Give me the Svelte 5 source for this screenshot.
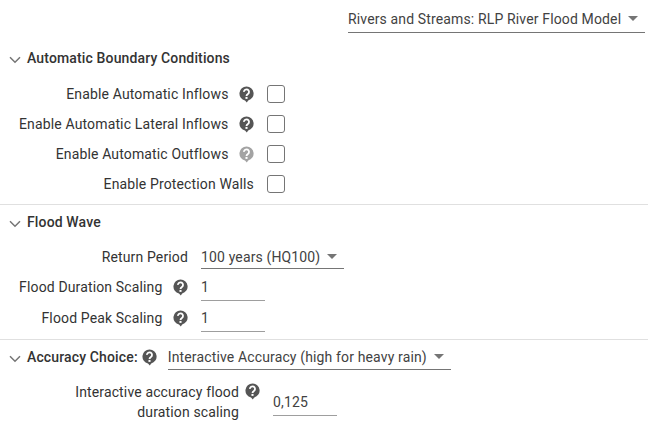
<script>
  const boundaryRows = [
    { label: "Enable Automatic Inflows", help: "on" },
    { label: "Enable Automatic Lateral Inflows", help: "on" },
    { label: "Enable Automatic Outflows", help: "off" },
    { label: "Enable Protection Walls", help: null },
  ];
</script>

{#snippet helpIcon(state)}
  <svg class="help {state}" viewBox="0 0 16 18" width="15" height="17" aria-hidden="true">
    <path class="bubble" d="M8 .5a7.5 7.5 0 0 0-1.6 14.83L8.3 17.6l1.5-2.3A7.5 7.5 0 0 0 8 .5z" />
    <path class="mark" d="M5.3 6.2a2.7 2.7 0 1 1 4.2 2.2c-1 .7-1.5 1.1-1.5 2.3" />
    <rect class="dot" x="6.9" y="11.6" width="2.2" height="2.1" />
  </svg>
{/snippet}

{#snippet chevron()}
  <svg class="chevron" viewBox="0 0 12 8" width="12" height="8" aria-hidden="true">
    <path d="M1 1.2l5 5 5-5" />
  </svg>
{/snippet}

{#snippet select(text, cls)}
  <div class="select {cls}">
    <span>{text}</span>
    <i class="caret"></i>
  </div>
{/snippet}

<div class="panel">
  <div class="top">
    {@render select("Rivers and Streams: RLP River Flood Model", "model")}
  </div>

  <section class="boundary">
    <h3>{@render chevron()}Automatic Boundary Conditions</h3>
    {#each boundaryRows as row}
      <div class="row">
        <div class="label">
          <span>{row.label}</span>
          {#if row.help}{@render helpIcon(row.help)}{/if}
        </div>
        <div class="checkbox"></div>
      </div>
    {/each}
  </section>

  <section class="wave">
    <h3>{@render chevron()}Flood Wave</h3>
    <div class="row">
      <div class="label"><span>Return Period</span></div>
      {@render select("100 years (HQ100)", "period")}
    </div>
    <div class="row">
      <div class="label"><span>Flood Duration Scaling</span>{@render helpIcon("on")}</div>
      <div class="input">1</div>
    </div>
    <div class="row peak">
      <div class="label"><span>Flood Peak Scaling</span>{@render helpIcon("on")}</div>
      <div class="input">1</div>
    </div>
  </section>

  <section class="accuracy">
    <div class="choice">
      <h3>{@render chevron()}Accuracy Choice:</h3>
      {@render helpIcon("on")}
      {@render select("Interactive Accuracy (high for heavy rain)", "mode")}
    </div>
    <div class="row tall">
      <div class="label">
        <span>Interactive accuracy flood<br />duration scaling</span>
        {@render helpIcon("on")}
      </div>
      <div class="input">0,125</div>
    </div>
  </section>
</div>

<style>
  :global(body) {
    background: #fff;
  }

  .panel {
    width: 648px;
    height: 435px;
    overflow: hidden;
    box-sizing: border-box;
    font-family: Roboto, sans-serif;
    font-size: 14px;
    line-height: 20px;
    letter-spacing: 0.14px;
    color: #333;
  }

  .top {
    display: flex;
    justify-content: flex-end;
    padding: 5px 3px 0 0;
    height: 43px;
    box-sizing: border-box;
  }

  section {
    border-bottom: 1px solid #e0e0e0;
    box-sizing: border-box;
  }

  section.boundary {
    height: 162px;
  }

  section.wave {
    height: 135px;
  }

  section.accuracy {
    border-bottom: none;
  }

  h3 {
    display: flex;
    align-items: center;
    gap: 6px;
    margin: 0;
    padding-left: 9px;
    font-size: 14px;
    font-weight: 500;
    line-height: 20px;
    height: 30px;
  }

  .chevron {
    flex: none;
    margin-top: 3px;
  }

  .chevron path {
    fill: none;
    stroke: #757575;
    stroke-width: 1.5;
  }

  .boundary h3 {
    margin-bottom: 6px;
  }

  .wave h3 {
    height: 34px;
    margin-bottom: 3px;
  }

  .row {
    display: flex;
    align-items: center;
    height: 30px;
  }

  .row.peak {
    margin-top: 1px;
  }

  .label {
    display: flex;
    align-items: center;
    justify-content: flex-end;
    gap: 10.5px;
    flex: none;
    text-align: right;
  }

  .boundary .label {
    width: 254px;
    margin-right: 13px;
  }

  .wave .label {
    width: 188px;
    margin-right: 13px;
  }

  .help {
    flex: none;
    margin-top: 1px;
  }

  .help .bubble {
    fill: #555;
  }

  .help.off .bubble {
    fill: #a3a3a3;
  }

  .help .mark {
    fill: none;
    stroke: #fff;
    stroke-width: 1.9;
  }

  .help .dot {
    fill: #fff;
  }

  .checkbox {
    width: 18px;
    height: 18px;
    box-sizing: border-box;
    border: 1px solid #757575;
    border-radius: 3px;
  }

  .select {
    display: flex;
    align-items: center;
    justify-content: space-between;
    box-sizing: border-box;
    height: 28px;
    border-bottom: 1px solid #757575;
    color: #424242;
  }

  .select.model {
    width: 297px;
  }

  .select.period {
    width: 143px;
    height: 24px;
  }

  .select.mode {
    width: 283px;
    height: 26px;
  }

  .caret {
    width: 0;
    height: 0;
    margin-right: 7px;
    border-left: 5px solid transparent;
    border-right: 5px solid transparent;
    border-top: 5px solid #757575;
  }

  .input {
    width: 64px;
    height: 27px;
    box-sizing: border-box;
    border-bottom: 1px solid #9e9e9e;
    line-height: 26px;
    color: #424242;
  }

  .choice {
    display: flex;
    align-items: center;
    height: 34px;
  }

  .choice h3 {
    margin-right: 4px;
  }

  .choice .select {
    margin-left: 11px;
  }

  .row.tall {
    height: 52px;
    margin-top: 2px;
  }

  .row.tall .label {
    width: 260px;
    margin-right: 13px;
    gap: 6px;
    align-items: flex-start;
  }
</style>
